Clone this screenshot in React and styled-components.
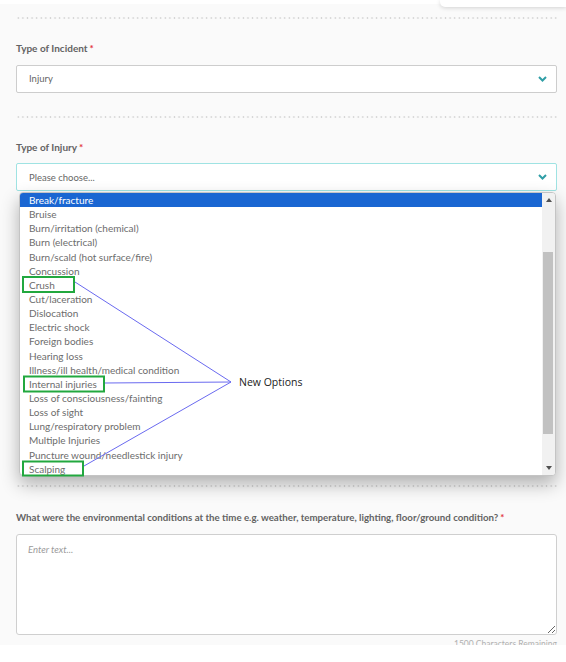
import React from 'react';
import styled, { createGlobalStyle } from 'styled-components';

const GlobalStyle = createGlobalStyle`
  html, body {
    margin: 0;
    padding: 0;
    background: #ffffff;
  }
  body {
    font-family: Lato, "Noto Sans", sans-serif;
  }
`;

const Page = styled.div`
  position: relative;
  width: 566px;
  height: 645px;
  overflow: hidden;
  background: #fafafa;
`;

const TopBar = styled.div`
  display: flex;
  align-items: flex-start;
  height: 8px;

  & > .strip {
    flex: 1;
    height: 4px;
    background: #ffffff;
  }

  & > .card {
    width: 126px;
    height: 7px;
    background: #ffffff;
    border-radius: 0 0 0 5px;
    box-shadow: 0 1px 4px rgba(0, 0, 0, 0.16);
  }
`;

const Form = styled.div`
  padding: 0 9px 0 16px;
`;

const Divider = styled.div`
  height: 2px;
  margin-top: ${(p) => p.$top || 0}px;
  background-image: radial-gradient(circle, #d4d4d4 0.8px, transparent 1.1px);
  background-size: 4.6px 2px;
`;

const Field = styled.div`
  position: relative;
  padding-top: ${(p) => p.$top || 22}px;
  padding-bottom: ${(p) => p.$bottom || 0}px;
`;

const Label = styled.div`
  font-size: ${(p) => p.$size || 10}px;
  line-height: 14px;
  font-weight: 700;
  color: #636363;
  margin-bottom: 9.5px;
  white-space: nowrap;

  & > span {
    color: #e2333b;
    margin-left: 2px;
  }
`;

const SelectBox = styled.div`
  position: relative;
  height: 28px;
  box-sizing: border-box;
  display: flex;
  align-items: center;
  justify-content: space-between;
  padding: 0 9px 0 12px;
  background: #ffffff;
  border: 1px solid ${(p) => (p.$focused ? '#9fe3e3' : '#cdcdcd')};
  border-radius: 2px;
  font-size: 9.5px;
  color: #666666;
`;

const Menu = styled.div`
  position: absolute;
  top: 28px;
  left: 2px;
  right: 0;
  height: 284px;
  box-sizing: border-box;
  display: flex;
  background: #ffffff;
  border: 1px solid #c4c4c4;
  border-radius: 4px;
  box-shadow: 0 8px 18px rgba(0, 0, 0, 0.3);
  overflow: hidden;
  z-index: 5;
`;

const OptionList = styled.div`
  flex: 1;
`;

const Option = styled.div`
  height: 14.15px;
  line-height: 14.15px;
  padding-left: 9px;
  font-size: 10px;
  color: ${(p) => (p.$active ? '#ffffff' : '#6c6c6c')};
  background: ${(p) => (p.$active ? '#1a66d2' : 'transparent')};
  white-space: nowrap;
`;

const Scrollbar = styled.div`
  width: 13px;
  display: flex;
  flex-direction: column;
  background: #f1f1f1;
`;

const Arrow = styled.div`
  height: 14px;
  display: flex;
  align-items: center;
  justify-content: center;

  &::before {
    content: '';
    width: 0;
    height: 0;
    border-left: 3.5px solid transparent;
    border-right: 3.5px solid transparent;
    ${(p) =>
      p.$down
        ? 'border-top: 4px solid #505050;'
        : 'border-bottom: 4px solid #505050;'}
  }
`;

const Track = styled.div`
  flex: 1;
  padding: 45px 2px 0 1px;
`;

const Thumb = styled.div`
  height: 182px;
  background: #c1c1c1;
`;

const Spacer = styled.div`
  height: ${(p) => p.$h}px;
`;

const TextArea = styled.textarea`
  display: block;
  width: 100%;
  height: 101px;
  box-sizing: border-box;
  padding: 8px 11px;
  border: 1px solid #cfcfcf;
  border-radius: 3px;
  background: #ffffff;
  font-family: Lato, "Noto Sans", sans-serif;
  font-size: 9.5px;
  line-height: 14px;
  color: #555555;
  resize: vertical;
  outline: none;

  &::placeholder {
    font-style: italic;
    color: #9a9a9a;
  }
`;

const Counter = styled.div`
  text-align: right;
  font-size: 8.5px;
  line-height: 10px;
  color: #b0b0b0;
  margin-top: 4px;
`;

const Annotations = styled.svg`
  position: absolute;
  left: 0;
  top: 0;
  pointer-events: none;
  z-index: 10;
`;

const Callout = styled.div`
  position: absolute;
  left: 239px;
  top: 375px;
  font-family: "Open Sans", "Liberation Sans", sans-serif;
  font-size: 10.5px;
  line-height: 14px;
  color: #222222;
  z-index: 10;
`;

const Chevron = () => (
  <svg width="9" height="6" viewBox="0 0 9 6">
    <polyline points="1,1 4.5,4.5 8,1" fill="none" stroke="#2f9ea6" strokeWidth="2" />
  </svg>
);

const injuries = [
  'Break/fracture',
  'Bruise',
  'Burn/irritation (chemical)',
  'Burn (electrical)',
  'Burn/scald (hot surface/fire)',
  'Concussion',
  'Crush',
  'Cut/laceration',
  'Dislocation',
  'Electric shock',
  'Foreign bodies',
  'Hearing loss',
  'Illness/ill health/medical condition',
  'Internal injuries',
  'Loss of consciousness/fainting',
  'Loss of sight',
  'Lung/respiratory problem',
  'Multiple Injuries',
  'Puncture wound/needlestick injury',
  'Scalping',
];

const App = () => {
  return (
    <Page>
      <GlobalStyle />
      <TopBar>
        <div className="strip" />
        <div className="card" />
      </TopBar>
      <Form>
        <Divider $top={9} />
        <Field $top={22} $bottom={23}>
          <Label>
            Type of Incident<span>*</span>
          </Label>
          <SelectBox>
            Injury
            <Chevron />
          </SelectBox>
        </Field>
        <Divider />
        <Field $top={22}>
          <Label>
            Type of Injury<span>*</span>
          </Label>
          <SelectBox $focused>
            Please choose...
            <Chevron />
            <Menu>
              <OptionList>
                {injuries.map((name, i) => (
                  <Option key={name} $active={i === 0}>
                    {name}
                  </Option>
                ))}
              </OptionList>
              <Scrollbar>
                <Arrow />
                <Track>
                  <Thumb />
                </Track>
                <Arrow $down />
              </Scrollbar>
            </Menu>
          </SelectBox>
        </Field>
        <Spacer $h={294} />
        <Divider />
        <Field $top={23}>
          <Label $size={9.7}>
            What were the environmental conditions at the time e.g. weather, temperature, lighting, floor/ground condition?<span>*</span>
          </Label>
          <TextArea placeholder="Enter text..." />
          <Counter>1500 Characters Remaining</Counter>
        </Field>
      </Form>

      <Annotations width="566" height="662" viewBox="0 0 566 662">
        <g fill="none" stroke="#22a83f" strokeWidth="2">
          <rect x="23" y="277" width="51" height="15" />
          <rect x="24" y="376.5" width="80" height="15" />
          <rect x="23" y="461.5" width="60" height="14" />
        </g>
        <g stroke="#6a6af0" strokeWidth="1">
          <line x1="75" y1="282" x2="231" y2="382" />
          <line x1="105" y1="383" x2="231" y2="382" />
          <line x1="84" y1="466" x2="231" y2="382" />
        </g>
      </Annotations>
      <Callout>New Options</Callout>
    </Page>
  );
};

export default App;
